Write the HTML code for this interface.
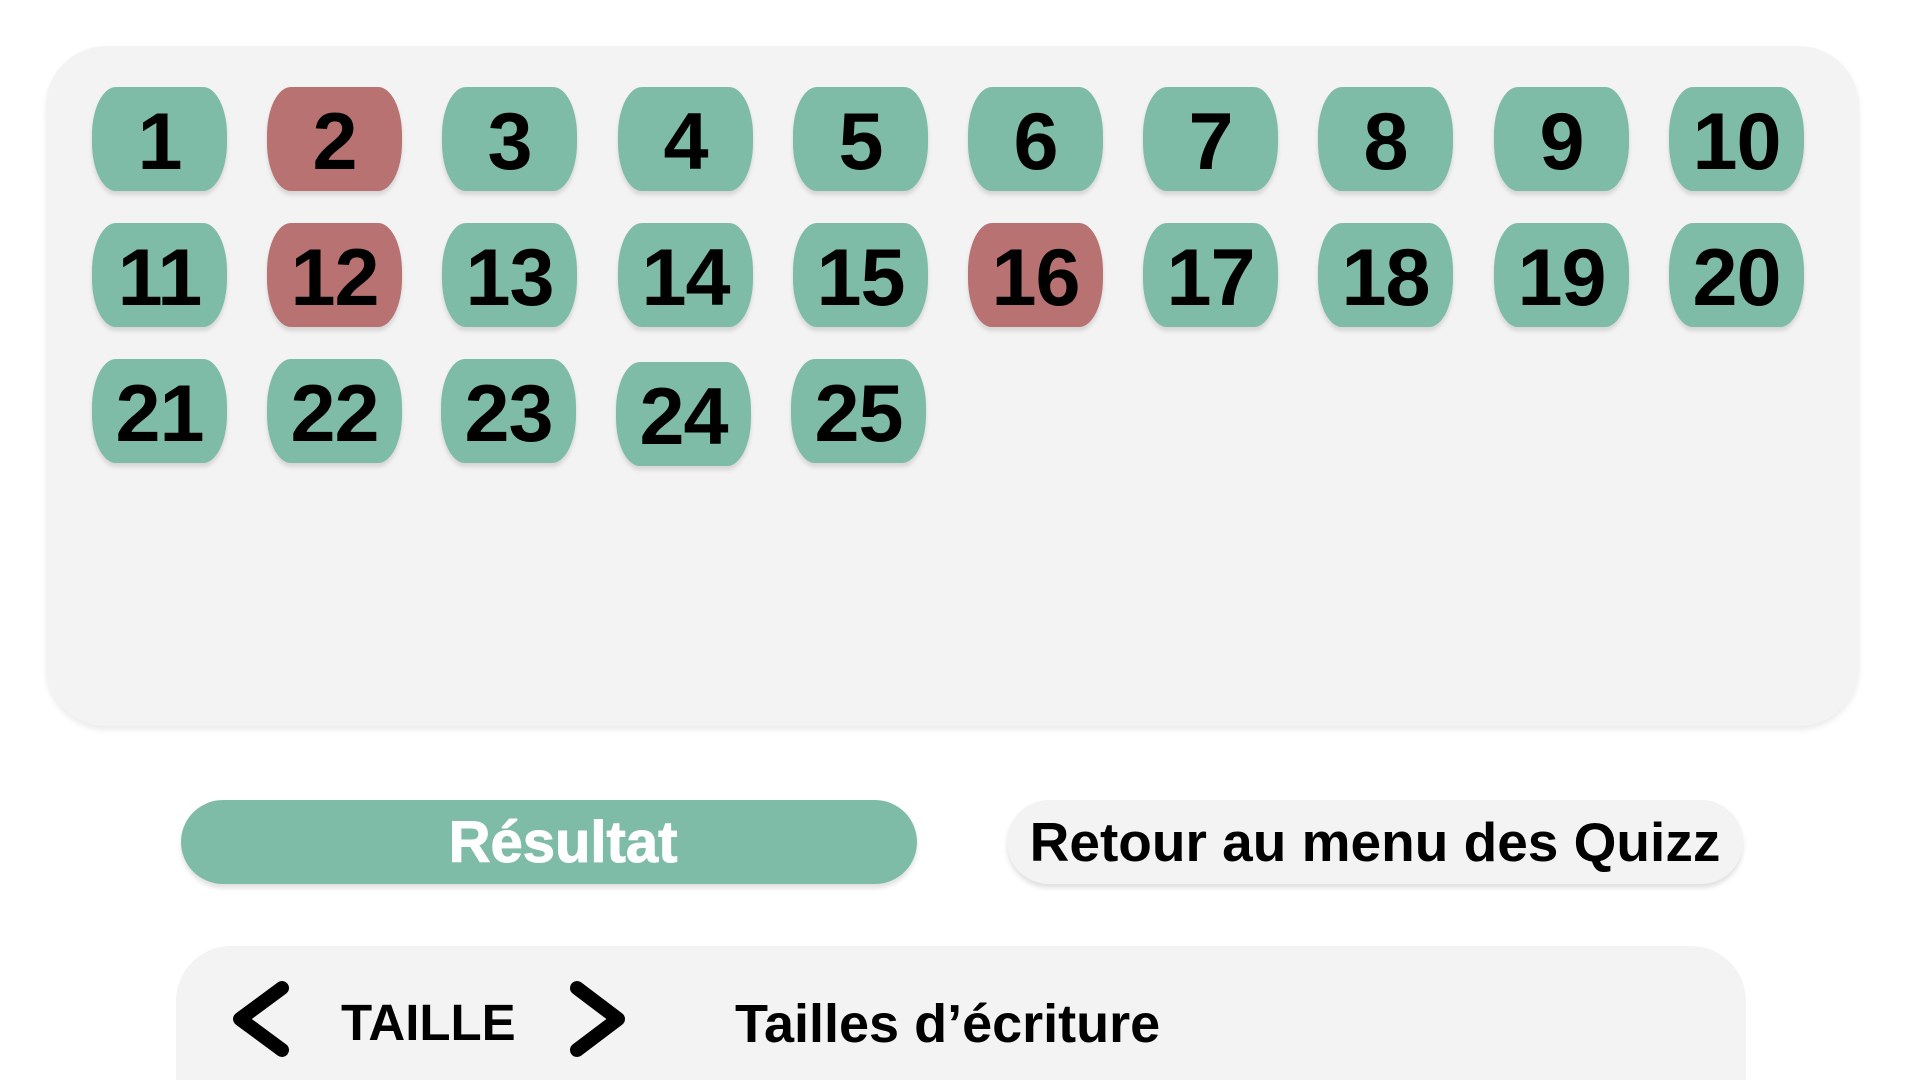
<!DOCTYPE html>
<html><head><meta charset="utf-8"><style>
*{margin:0;padding:0;box-sizing:border-box}
html,body{width:1920px;height:1080px;overflow:hidden}
body{background:#fff;position:relative;font-family:"Liberation Sans",sans-serif;font-weight:bold;color:#000}
.panel{position:absolute;left:46px;top:46px;width:1813px;height:680px;background:#f3f3f3;border-radius:60px;box-shadow:0 4px 6px rgba(0,0,0,.08)}
.t{position:absolute;width:135px;height:104px;background:#7fbca8;border-radius:24px/48px;box-shadow:0 4px 4px rgba(0,0,0,.12);display:flex;align-items:center;justify-content:center;font-size:81px;letter-spacing:-1px;line-height:1;padding-top:6px}
.r{background:#b87272}
.btn{position:absolute;top:800px;height:84px;border-radius:42px;display:flex;align-items:center;justify-content:center;box-shadow:0 4px 5px rgba(0,0,0,.12)}
.bottom{position:absolute;left:176px;top:946px;width:1570px;height:134px;background:#f3f3f3;border-radius:55px 55px 0 0}
</style></head><body>
<div class="panel"></div>
<div class="t" style="left:92px;top:87px">1</div>
<div class="t r" style="left:267px;top:87px">2</div>
<div class="t" style="left:442px;top:87px">3</div>
<div class="t" style="left:618px;top:87px">4</div>
<div class="t" style="left:793px;top:87px">5</div>
<div class="t" style="left:968px;top:87px">6</div>
<div class="t" style="left:1143px;top:87px">7</div>
<div class="t" style="left:1318px;top:87px">8</div>
<div class="t" style="left:1494px;top:87px">9</div>
<div class="t" style="left:1669px;top:87px">10</div>
<div class="t" style="left:92px;top:223px">11</div>
<div class="t r" style="left:267px;top:223px">12</div>
<div class="t" style="left:442px;top:223px">13</div>
<div class="t" style="left:618px;top:223px">14</div>
<div class="t" style="left:793px;top:223px">15</div>
<div class="t r" style="left:968px;top:223px">16</div>
<div class="t" style="left:1143px;top:223px">17</div>
<div class="t" style="left:1318px;top:223px">18</div>
<div class="t" style="left:1494px;top:223px">19</div>
<div class="t" style="left:1669px;top:223px">20</div>
<div class="t" style="left:92px;top:359px">21</div>
<div class="t" style="left:267px;top:359px">22</div>
<div class="t" style="left:441px;top:359px">23</div>
<div class="t" style="left:616px;top:362px">24</div>
<div class="t" style="left:791px;top:359px">25</div>
<div class="btn" style="left:181px;width:736px;background:#7fbca8;color:#fff;font-size:58px;-webkit-text-stroke:1px #fff;padding-left:28px">Résultat</div>
<div class="btn" style="left:1007px;width:736px;background:#f3f3f3;font-size:55px">Retour au menu des Quizz</div>
<div class="bottom"></div>
<svg style="position:absolute;left:0;top:0" width="1920" height="1080"><g fill="none" stroke="#000" stroke-width="14" stroke-linecap="round" stroke-linejoin="round"><path d="M282 988L240 1019L282 1050"/><path d="M577 988L618 1019L577 1050"/></g></svg>
<div style="position:absolute;left:341px;top:997px;font-size:51px;line-height:1">TAILLE</div>
<div style="position:absolute;left:735px;top:997px;font-size:54px;line-height:1;white-space:nowrap">Tailles d’écriture</div>
</body></html>
